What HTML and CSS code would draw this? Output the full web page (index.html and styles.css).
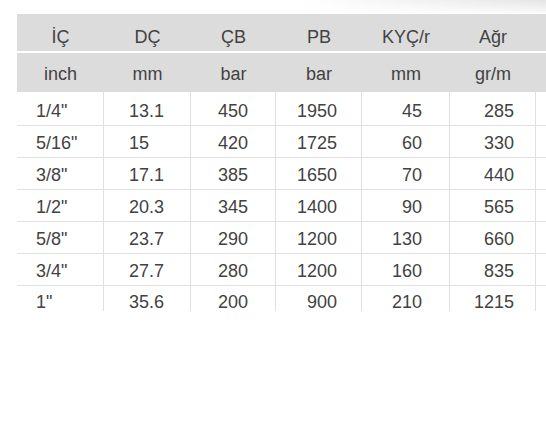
FILE: index.html
```html
<!DOCTYPE html>
<html lang="tr">
<head>
<meta charset="utf-8">
<title>Hortum Tablosu</title>
<link rel="stylesheet" href="styles.css">
</head>
<body>
<div class="shade"></div>
<div class="spec">
  <div class="row head head-1">
    <div class="cell">İÇ</div>
    <div class="cell">DÇ</div>
    <div class="cell">ÇB</div>
    <div class="cell">PB</div>
    <div class="cell">KYÇ/r</div>
    <div class="cell">Ağr</div>
    <div class="cell"></div>
  </div>
  <div class="row head head-2">
    <div class="cell">inch</div>
    <div class="cell">mm</div>
    <div class="cell">bar</div>
    <div class="cell">bar</div>
    <div class="cell">mm</div>
    <div class="cell">gr/m</div>
    <div class="cell"></div>
  </div>
  <div class="body">
    <div class="row data first">
      <div class="cell c1">1/4"</div><div class="cell c2">13.1</div><div class="cell c3">450</div><div class="cell c4">1950</div><div class="cell c5">45</div><div class="cell c6">285</div><div class="cell"></div>
    </div>
    <div class="row data">
      <div class="cell c1">5/16"</div><div class="cell c2">15</div><div class="cell c3">420</div><div class="cell c4">1725</div><div class="cell c5">60</div><div class="cell c6">330</div><div class="cell"></div>
    </div>
    <div class="row data">
      <div class="cell c1">3/8"</div><div class="cell c2">17.1</div><div class="cell c3">385</div><div class="cell c4">1650</div><div class="cell c5">70</div><div class="cell c6">440</div><div class="cell"></div>
    </div>
    <div class="row data">
      <div class="cell c1">1/2"</div><div class="cell c2">20.3</div><div class="cell c3">345</div><div class="cell c4">1400</div><div class="cell c5">90</div><div class="cell c6">565</div><div class="cell"></div>
    </div>
    <div class="row data">
      <div class="cell c1">5/8"</div><div class="cell c2">23.7</div><div class="cell c3">290</div><div class="cell c4">1200</div><div class="cell c5">130</div><div class="cell c6">660</div><div class="cell"></div>
    </div>
    <div class="row data">
      <div class="cell c1">3/4"</div><div class="cell c2">27.7</div><div class="cell c3">280</div><div class="cell c4">1200</div><div class="cell c5">160</div><div class="cell c6">835</div><div class="cell"></div>
    </div>
    <div class="row data last">
      <div class="cell c1">1"</div><div class="cell c2">35.6</div><div class="cell c3">200</div><div class="cell c4">900</div><div class="cell c5">210</div><div class="cell c6">1215</div><div class="cell"></div>
    </div>
  </div>
</div>
</body>
</html>
```
FILE: styles.css
```css
html, body {
  margin: 0;
  padding: 0;
  background: #ffffff;
}
body {
  width: 546px;
  height: 445px;
  overflow: hidden;
  position: relative;
  font-family: "Liberation Sans", Arial, Helvetica, sans-serif;
  color: #424242;
}
.shade {
  position: absolute;
  left: 0;
  top: 0;
  width: 546px;
  height: 14px;
  background: linear-gradient(to right, rgba(255,255,255,0) 55%, rgba(225,225,225,0.9) 100%);
  -webkit-mask-image: linear-gradient(to bottom, #000 0%, rgba(0,0,0,0.3) 80%, rgba(0,0,0,0) 100%);
  mask-image: linear-gradient(to bottom, #000 0%, rgba(0,0,0,0.3) 80%, rgba(0,0,0,0) 100%);
}
.spec {
  padding-top: 14px;
  margin-left: 17px;
  width: 529px;
}
.row {
  display: grid;
  grid-template-columns: 87px 87px 85px 86px 88px 86px 10px;
}
.cell {
  box-sizing: border-box;
  font-size: 18px;
  line-height: 18px;
  white-space: nowrap;
}
.head {
  background: #dcdcdc;
}
.head .cell {
  text-align: center;
}
.head-1 {
  height: 37px;
}
.head-1 .cell {
  padding-top: 14px;
}
.head-2 {
  height: 39px;
  margin-top: 2px;
}
.head-2 .cell {
  padding-top: 12px;
}
.data {
  height: 32px;
  border-bottom: 1px solid #e0e0e0;
  box-sizing: border-box;
}
.data .cell {
  border-right: 1px solid #e0e0e0;
  padding-top: 8px;
}
.data .cell:last-child {
  border-right: none;
}
.data.first {
  height: 34px;
}
.data.first .cell {
  padding-top: 10px;
}
.data.last {
  height: 25px;
  border-bottom: none;
  overflow: hidden;
}
.data.last .cell {
  padding-top: 7px;
}
.c1 { text-align: left; padding-left: 19px; }
.c2 { text-align: left; padding-left: 25px; }
.c3 { text-align: center; }
.c4 { text-align: right; padding-right: 24px; }
.c5 { text-align: right; padding-right: 27px; }
.c6 { text-align: right; padding-right: 21px; }
```
